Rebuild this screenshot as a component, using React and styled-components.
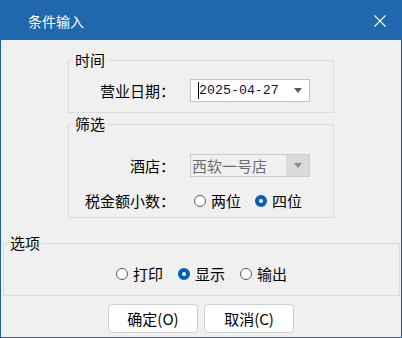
import React, { useState } from 'react'
import styled, { createGlobalStyle } from 'styled-components'

const Global = createGlobalStyle`
  html, body { margin: 0; padding: 0; background: #f0f0f0; }
  * { box-sizing: border-box; }
`

const CJK = `"Noto Sans CJK SC", "Noto Sans", sans-serif`

const RadioOption = ({ checked, label, onClick }) => (
  <RadioItem onClick={onClick}>
    <RadioDot $checked={checked} />
    <span>{label}</span>
  </RadioItem>
)

const App = () => {
  const [decimals, setDecimals] = useState('four')
  const [mode, setMode] = useState('show')

  return (
    <Window>
      <Global />
      <TitleBar>
        <span>条件输入</span>
        <CloseBtn>
          <svg width="12" height="12" viewBox="0 0 12 12">
            <path d="M0.5 0.5 L11.5 11.5 M11.5 0.5 L0.5 11.5" stroke="#fff" strokeWidth="1.1" />
          </svg>
        </CloseBtn>
      </TitleBar>

      <Body>
        <Group $top={11}>
          <Legend>时间</Legend>
          <FormGrid $pt={10} $pb={10}>
            <Label>营业日期：</Label>
            <DateBox>
              <Caret />
              <DateText>2025-04-27</DateText>
              <Arrow />
            </DateBox>
          </FormGrid>
        </Group>

        <Group $top={2}>
          <Legend>筛选</Legend>
          <FormGrid $pt={21} $pb={6} $gap={14}>
            <Label>酒店：</Label>
            <SelectBox>
              <SelectText>西软一号店</SelectText>
              <SelectBtn>
                <Arrow $muted />
              </SelectBtn>
            </SelectBox>
            <Label>税金额小数：</Label>
            <RadioRow>
              <RadioOption label="两位" checked={decimals === 'two'} onClick={() => setDecimals('two')} />
              <RadioOption label="四位" checked={decimals === 'four'} onClick={() => setDecimals('four')} />
            </RadioRow>
          </FormGrid>
        </Group>

        <Group $top={16} $wide>
          <Legend>选项</Legend>
          <CenterRow>
            <RadioOption label="打印" checked={mode === 'print'} onClick={() => setMode('print')} />
            <RadioOption label="显示" checked={mode === 'show'} onClick={() => setMode('show')} />
            <RadioOption label="输出" checked={mode === 'out'} onClick={() => setMode('out')} />
          </CenterRow>
        </Group>

        <Buttons>
          <Button>确定(O)</Button>
          <Button>取消(C)</Button>
        </Buttons>
      </Body>
    </Window>
  )
}

export default App

const Window = styled.div`
  width: 402px;
  height: 338px;
  display: flex;
  flex-direction: column;
  border: 1px solid #1d5e9f;
  border-top: none;
  font-family: ${CJK};
  color: #000;
`

const TitleBar = styled.div`
  height: 40px;
  margin: 0 -1px;
  background: #2067ad;
  color: #fff;
  font-size: 14px;
  display: flex;
  align-items: center;
  justify-content: space-between;
  padding: 1px 16px 0 28px;
`

const CloseBtn = styled.div`
  width: 12px;
  height: 12px;
  display: flex;
`

const Body = styled.div`
  flex: 1;
  background: #f0f0f0;
  display: flex;
  flex-direction: column;
`

const Group = styled.fieldset`
  margin: ${p => p.$top}px ${p => (p.$wide ? '1px' : '67px')} 0 ${p => (p.$wide ? '2px' : '67px')};
  padding: 0;
  min-width: 0;
  border: 1px solid #dcdcdc;
`

const Legend = styled.legend`
  margin-left: 4px;
  padding: 0 2px;
  font-size: 15px;
  line-height: 18px;
`

const FormGrid = styled.div`
  display: grid;
  grid-template-columns: 106px 120px;
  column-gap: 15px;
  row-gap: ${p => p.$gap || 0}px;
  align-items: center;
  padding: ${p => p.$pt}px 0 ${p => p.$pb}px;
`

const Label = styled.div`
  text-align: right;
  font-size: 15px;
  line-height: 20px;
`

const DateBox = styled.div`
  height: 23px;
  background: #fff;
  border: 1px solid #c4c4c4;
  display: flex;
  align-items: center;
  padding: 0 6px 0 7px;
`

const Caret = styled.span`
  width: 1px;
  height: 17px;
  background: #000;
`

const DateText = styled.span`
  flex: 1;
  font-family: "Liberation Mono", monospace;
  font-size: 13.3px;
  color: #10104a;
  letter-spacing: 0;
`

const Arrow = styled.span`
  width: 0;
  height: 0;
  border-left: 4.5px solid transparent;
  border-right: 4.5px solid transparent;
  border-top: 5px solid ${p => (p.$muted ? '#8a8a8a' : '#5a5a5a')};
  margin-right: ${p => (p.$muted ? 0 : 1)}px;
`

const SelectBox = styled.div`
  height: 23px;
  border: 1px solid #cccccc;
  background: #f0f0f0;
  display: flex;
  align-items: stretch;
`

const SelectText = styled.span`
  flex: 1;
  padding-left: 1px;
  font-size: 15px;
  line-height: 21px;
  color: #6d6d6d;
`

const SelectBtn = styled.span`
  width: 23px;
  background: #dadada;
  display: flex;
  align-items: center;
  justify-content: center;
`

const RadioRow = styled.div`
  display: flex;
  gap: 14px;
  padding-left: 4px;
`

const CenterRow = styled.div`
  display: flex;
  justify-content: center;
  gap: 15px;
  padding: 12px 0 11px;
`

const RadioItem = styled.label`
  display: flex;
  align-items: center;
  gap: 5px;
  font-size: 15px;
  line-height: 20px;
  cursor: pointer;
`

const RadioDot = styled.span`
  width: 12px;
  height: 12px;
  border-radius: 50%;
  border: ${p => (p.$checked ? '4px solid #005fb8' : '1px solid #5a5a5a')};
  background: #fff;
`

const Buttons = styled.div`
  display: flex;
  justify-content: center;
  gap: 6px;
  margin-top: 8px;
`

const Button = styled.button`
  width: 90px;
  height: 29px;
  background: #fff;
  border: 1px solid #d0d0d0;
  border-radius: 4px;
  font-family: ${CJK};
  font-size: 15px;
  color: #000;
  padding: 0;
`
